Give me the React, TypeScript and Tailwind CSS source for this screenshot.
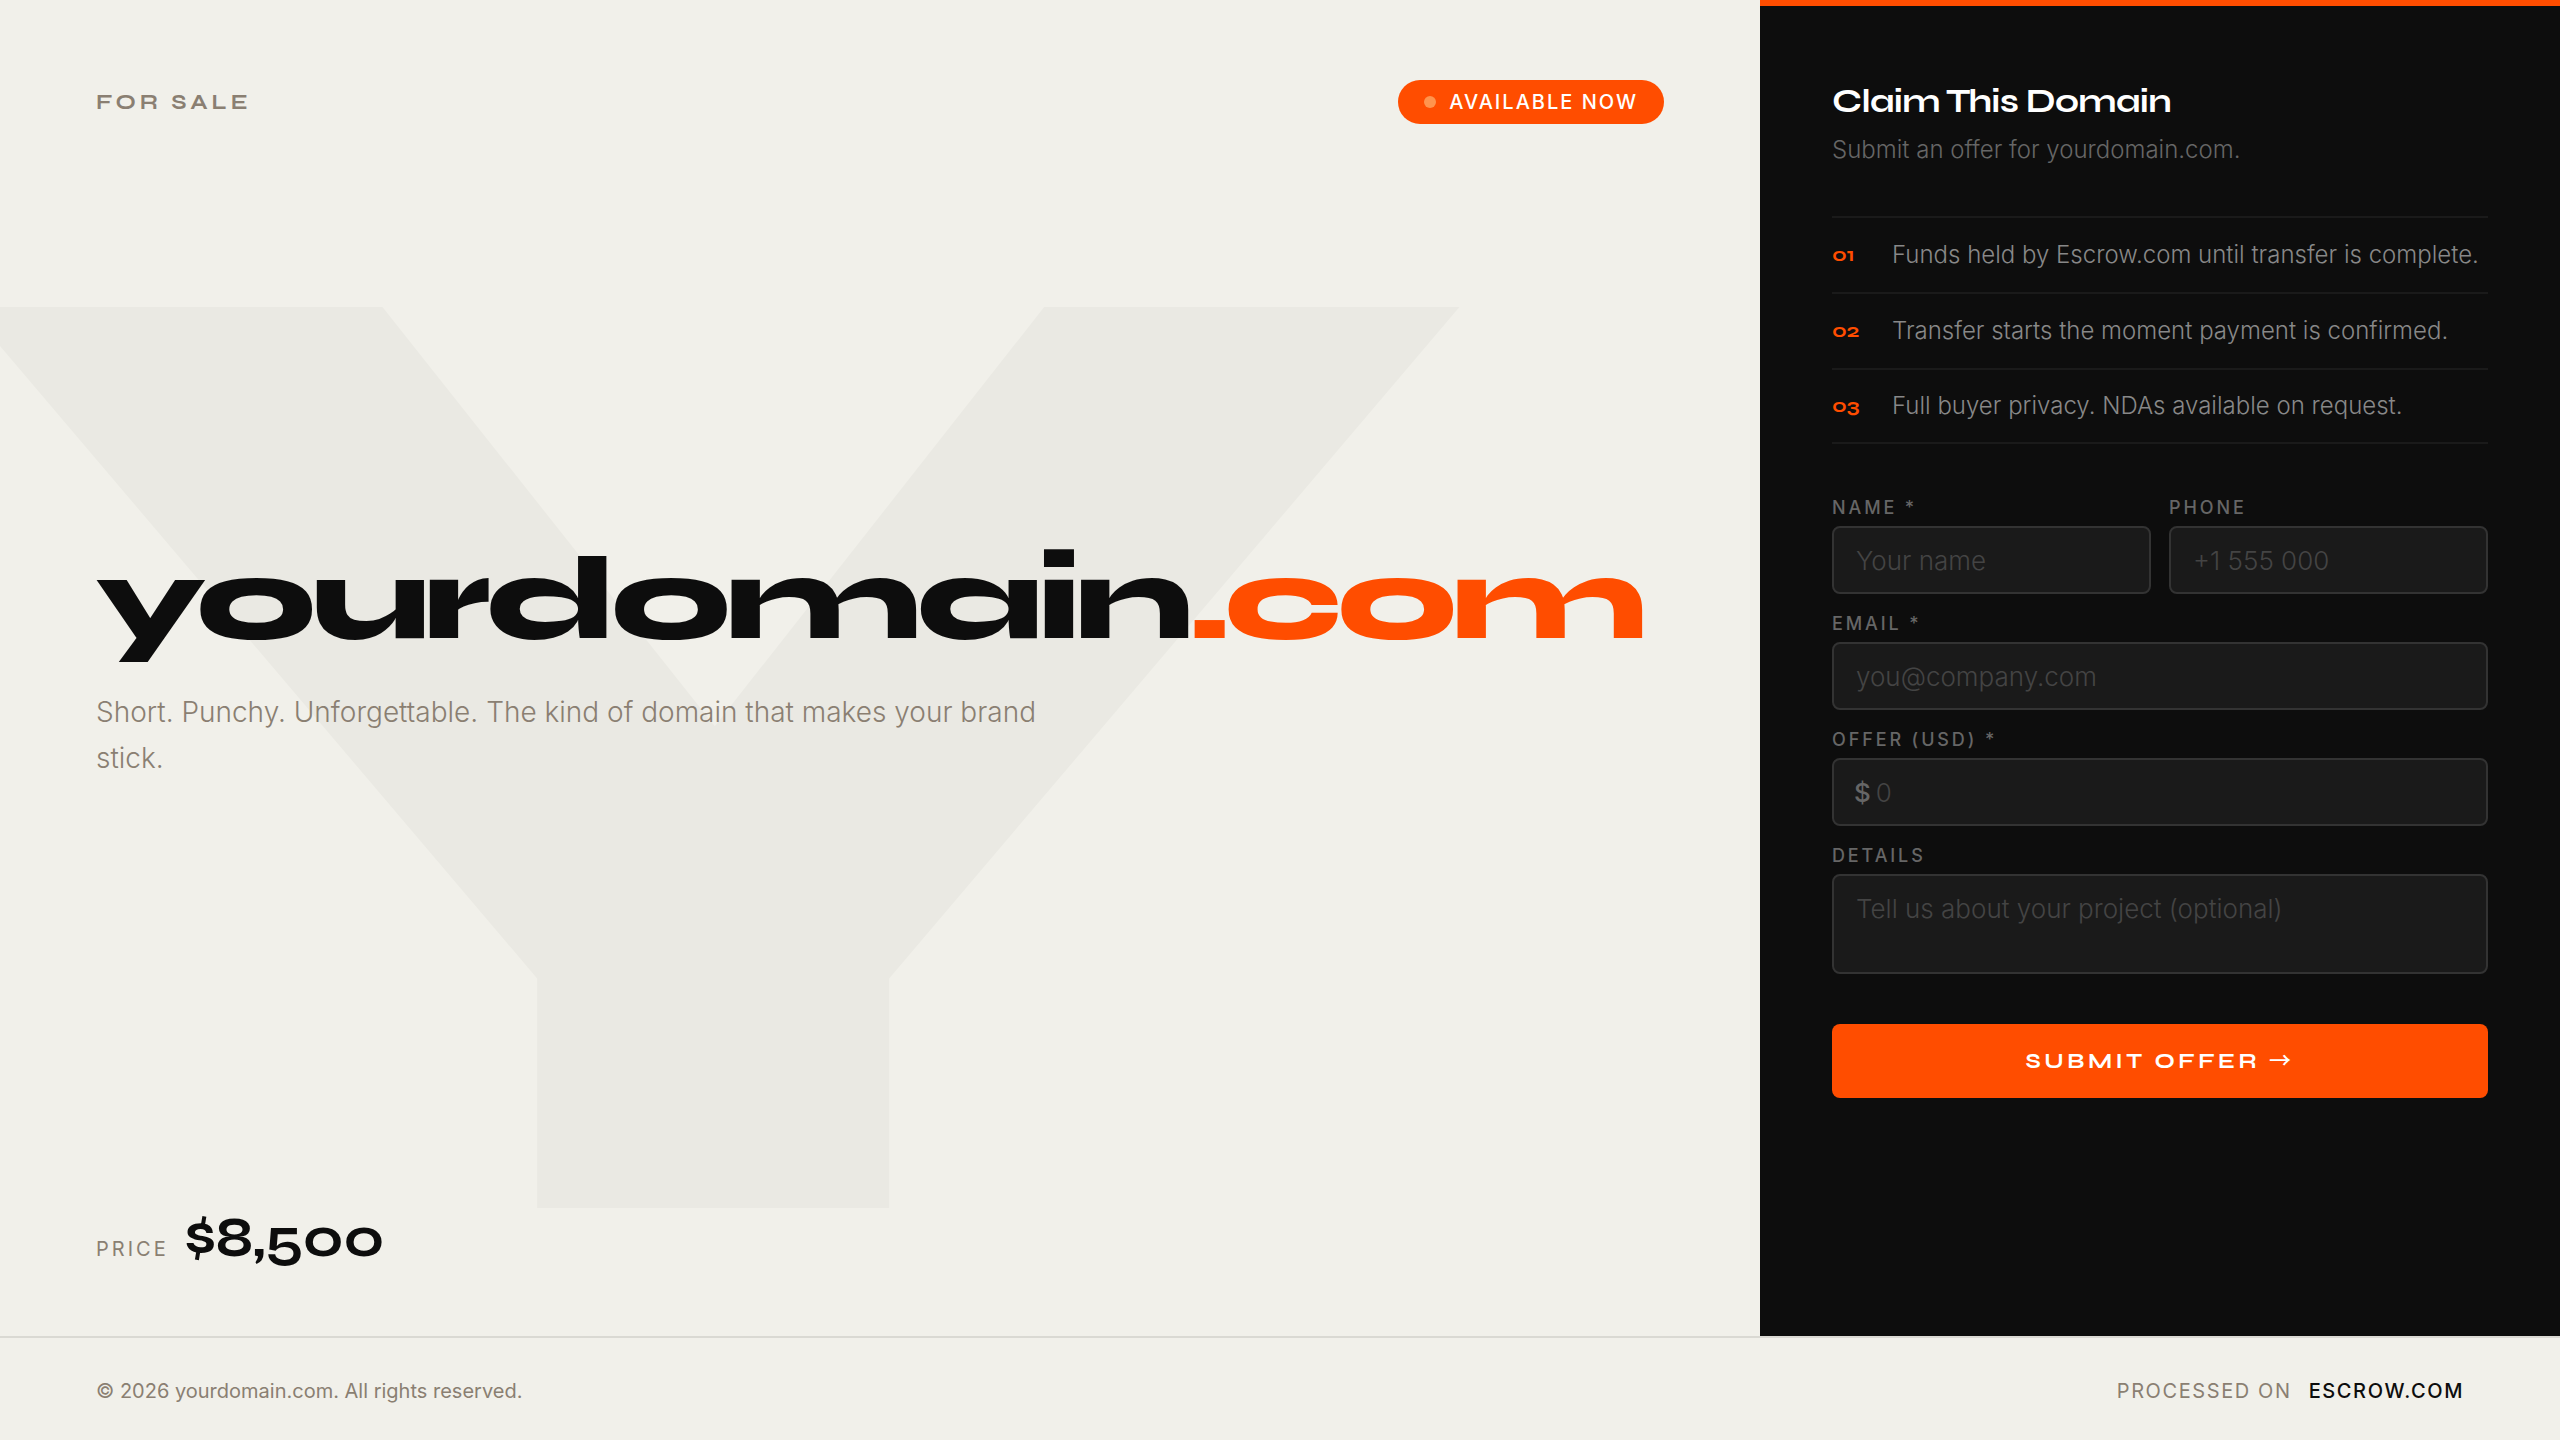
import React from 'react'

const display = "font-['Syne',sans-serif]"

const labelClass =
  'block h-6 mb-1.5 text-[18px] leading-6 font-medium tracking-[0.16em] uppercase text-[#666666]'
const fieldClass =
  'block w-full rounded-lg border-2 border-[#333333] bg-[#1a1a1a] px-[22px] text-[26px] font-light text-white placeholder:text-[#444444] outline-none focus:border-[#ff4d00]'

interface FieldProps {
  id: string
  label: string
  type: string
  placeholder: string
}

function Field(props: FieldProps) {
  return (
    <div>
      <label htmlFor={props.id} className={labelClass}>
        {props.label}
      </label>
      <input
        id={props.id}
        type={props.type}
        placeholder={props.placeholder}
        className={`${fieldClass} h-[68px]`}
      />
    </div>
  )
}

const points = [
  { num: '01', text: 'Funds held by Escrow.com until transfer is complete.' },
  { num: '02', text: 'Transfer starts the moment payment is confirmed.' },
  { num: '03', text: 'Full buyer privacy. NDAs available on request.' },
]

function Hero() {
  return (
    <section className="relative overflow-hidden min-w-0 flex flex-col justify-between px-24 pt-20 pb-[66px]">
      <div
        aria-hidden="true"
        className={`absolute -left-10 -bottom-[119px] text-[55vw] leading-none font-extrabold text-[#eae9e3] select-none ${display}`}
      >
        Y
      </div>

      <div className="relative flex items-center justify-between">
        <span
          className={`text-[22px] font-bold tracking-[0.18em] uppercase text-[#8a7f72] ${display}`}
        >
          For Sale
        </span>
        <span className="flex items-center gap-[13px] h-11 px-[26px] rounded-full bg-[#ff4d00] text-[20px] font-medium tracking-[0.1em] uppercase text-white">
          <span className="w-3 h-3 rounded-full bg-[#ff944d]"></span>
          Available Now
        </span>
      </div>

      <div className="relative pb-1">
        <h1
          className={`text-[118px] leading-[110px] font-extrabold tracking-[-0.04em] whitespace-nowrap text-[#0d0d0d] ${display}`}
        >
          yourdomain<span className="text-[#ff4d00]">.com</span>
        </h1>
        <p className="mt-[34px] max-w-[960px] text-[28px] leading-[46px] font-light text-[#8a7f72]">
          Short. Punchy. Unforgettable. The kind of domain that makes your brand
          stick.
        </p>
      </div>

      <div className="relative flex items-baseline gap-4">
        <span className="text-[20px] tracking-[0.15em] uppercase text-[#8a7f72]">
          Price
        </span>
        <span
          className={`text-[56px] leading-[64px] font-bold tracking-[-0.01em] text-[#0d0d0d] ${display}`}
        >
          $8,500
        </span>
      </div>
    </section>
  )
}

function OfferPanel() {
  return (
    <aside className="border-t-[6px] border-[#ff4d00] bg-[#0d0d0d] px-[72px] pt-[73px] pb-16">
      <h2
        className={`text-[34px] leading-[44px] font-bold tracking-[-0.02em] text-white ${display}`}
      >
        Claim This Domain
      </h2>
      <p className="mt-2 text-[24px] leading-[38px] font-light text-[#666666]">
        Submit an offer for yourdomain.com.
      </p>

      <ul className="mt-[47px] border-t-2 border-[#1a1a1a]">
        {points.map((p) => (
          <li
            key={p.num}
            className="flex items-center h-[76px] last:h-[74px] border-b-2 border-[#1a1a1a]"
          >
            <span className={`w-[60px] text-[20px] font-bold text-[#ff4d00] ${display}`}>
              {p.num}
            </span>
            <span className="text-[24px] font-light text-[#888888]">{p.text}</span>
          </li>
        ))}
      </ul>

      <form className="mt-[52px] flex flex-col gap-[18px]">
        <div className="grid grid-cols-2 gap-[18px]">
          <Field id="name" label="Name *" type="text" placeholder="Your name" />
          <Field id="phone" label="Phone" type="tel" placeholder="+1 555 000" />
        </div>
        <Field id="email" label="Email *" type="email" placeholder="you@company.com" />
        <div>
          <label htmlFor="offer" className={labelClass}>
            Offer (USD) *
          </label>
          <div className="flex items-center gap-[5px] h-[68px] rounded-lg border-2 border-[#333333] bg-[#1a1a1a] px-5 text-[26px]">
            <span className="font-medium text-[#666666]">$</span>
            <input
              id="offer"
              type="text"
              inputMode="numeric"
              placeholder="0"
              className="w-full bg-transparent font-light text-white placeholder:text-[#444444] outline-none"
            />
          </div>
        </div>
        <div>
          <label htmlFor="details" className={labelClass}>
            Details
          </label>
          <textarea
            id="details"
            placeholder="Tell us about your project (optional)"
            className={`${fieldClass} h-[100px] py-4 leading-[34px] resize-none`}
          />
        </div>
        <button
          type="submit"
          className={`mt-8 h-[74px] rounded-lg bg-[#ff4d00] text-[22px] font-bold tracking-[0.16em] uppercase text-white ${display}`}
        >
          Submit Offer{' '}
          <span className="font-['Noto_Sans_CJK_JP',sans-serif] font-medium leading-none">→</span>
        </button>
      </form>
    </aside>
  )
}

function Footer() {
  return (
    <footer className="flex items-center justify-between h-[104px] px-24 pt-1 border-t-2 border-[#dad9d3] text-[20px] text-[#8a7f72]">
      <span>© 2026 yourdomain.com. All rights reserved.</span>
      <span className="flex gap-[17px] tracking-[0.08em] uppercase">
        Processed on
        <a href="https://www.escrow.com" className="font-medium text-[#0d0d0d]">
          Escrow.com
        </a>
      </span>
    </footer>
  )
}

export default function App() {
  return (
    <div className="min-h-screen flex flex-col bg-[#f1f0ea] font-['Inter',sans-serif]">
      <main className="flex-1 grid grid-cols-[1fr_800px]">
        <Hero />
        <OfferPanel />
      </main>
      <Footer />
    </div>
  )
}
